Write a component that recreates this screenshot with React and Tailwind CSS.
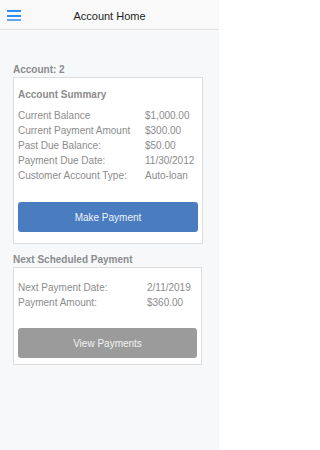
import React from 'react';

// Simple label/value row used in both cards
const InfoRow = ({ label, value, labelWidth }) => (
  <div className="flex h-[15px] items-center">
    <span className={`${labelWidth} shrink-0 text-[#8c8c8c]`}>{label}</span>
    <span className="text-[#8c8c8c]">{value}</span>
  </div>
);

const Hamburger = () => (
  <div className="absolute left-[7px] top-[10px] flex w-[14px] flex-col gap-[2.5px]">
    <span className="h-[2px] w-full bg-[#2f8cf5]" />
    <span className="h-[2px] w-full bg-[#2f8cf5]" />
    <span className="h-[2px] w-full bg-[#5fa6f7]" />
  </div>
);

const summary = [
  ['Current Balance', '$1,000.00'],
  ['Current Payment Amount', '$300.00'],
  ['Past Due Balance:', '$50.00'],
  ['Payment Due Date:', '11/30/2012'],
  ['Customer Account Type:', 'Auto-loan'],
];

const nextPayment = [
  ['Next Payment Date:', '2/11/2019'],
  ['Payment Amount:', '$360.00'],
];

export default function App() {
  return (
    <div className="min-h-[450px] w-[219px] bg-[#f7f8fa] font-['Liberation_Sans',Arial,sans-serif] text-[10px]">
      {/* Header */}
      <div className="relative flex h-[30px] items-center justify-center border-b border-[#e4e4e4] bg-[#f9f9f9] pt-[3px]">
        <Hamburger />
        <span className="text-[11px] text-[#1c1c1c]">Account Home</span>
      </div>

      <div className="px-[13px] pt-[33px]">
        <div className="h-[14px] font-bold leading-[14px] text-[#8c8c8c]">Account: 2</div>

        {/* Account summary card */}
        <div className="w-[190px] border border-[#dedede] bg-white px-[4px] pb-[11px] pt-[10px]">
          <div className="h-[14px] font-bold leading-[14px] text-[#8c8c8c]">Account Summary</div>
          <div className="mt-[6px]">
            {summary.map(([label, value]) => (
              <InfoRow key={label} label={label} value={value} labelWidth="w-[127px]" />
            ))}
          </div>
          <button className="mt-[19px] flex h-[30px] w-full items-center justify-center rounded-[3px] bg-[#4a7cc0] text-[10px] text-[#eef3fa]">
            Make Payment
          </button>
        </div>

        <div className="mt-[9px] h-[14px] font-bold leading-[14px] text-[#8c8c8c]">Next Scheduled Payment</div>

        {/* Next payment card */}
        <div className="w-[189px] border border-[#dedede] bg-white px-[4px] pb-[6px] pt-[12px]">
          <div>
            {nextPayment.map(([label, value]) => (
              <InfoRow key={label} label={label} value={value} labelWidth="w-[129px]" />
            ))}
          </div>
          <button className="mt-[18px] flex h-[30px] w-full items-center justify-center rounded-[3px] bg-[#9b9b9b] text-[10px] text-[#f2f2f2]">
            View Payments
          </button>
        </div>
      </div>
    </div>
  );
}
